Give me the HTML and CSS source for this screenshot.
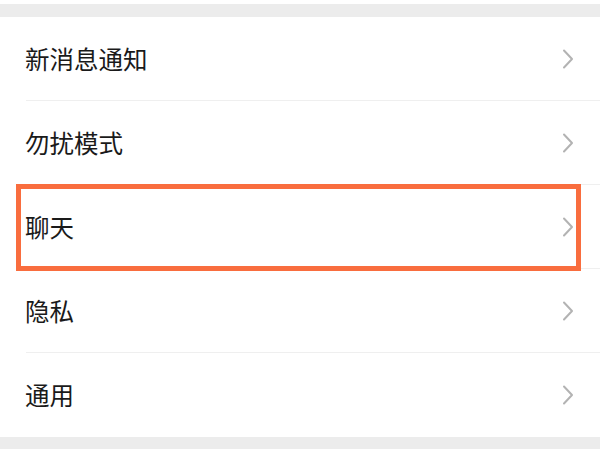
FILE: index.html
```html
<!DOCTYPE html>
<html lang="zh">
<head>
<meta charset="utf-8">
<link rel="stylesheet" href="styles.css">
</head>
<body>
<div class="page">
  <div class="band band-top"></div>
  <ul class="list">
    <li class="row"><span class="label">新消息通知</span><svg class="chev" viewBox="0 0 12 20"><path d="M2 1.5 L10 10 L2 18.5"/></svg></li>
    <li class="row"><span class="label">勿扰模式</span><svg class="chev" viewBox="0 0 12 20"><path d="M2 1.5 L10 10 L2 18.5"/></svg></li>
    <li class="row row-hl"><span class="label">聊天</span><svg class="chev" viewBox="0 0 12 20"><path d="M2 1.5 L10 10 L2 18.5"/></svg><div class="highlight"></div></li>
    <li class="row"><span class="label">隐私</span><svg class="chev" viewBox="0 0 12 20"><path d="M2 1.5 L10 10 L2 18.5"/></svg></li>
    <li class="row last"><span class="label">通用</span><svg class="chev" viewBox="0 0 12 20"><path d="M2 1.5 L10 10 L2 18.5"/></svg></li>
  </ul>
  <div class="band band-bottom"></div>
</div>
</body>
</html>
```
FILE: styles.css
```css
html, body {
  margin: 0;
  padding: 0;
  background: #ffffff;
}
.page {
  width: 600px;
  height: 450px;
  display: flex;
  flex-direction: column;
  padding-top: 4px;
  box-sizing: border-box;
  font-family: "Noto Sans CJK SC", "Noto Sans", sans-serif;
}
.band {
  background: #ececec;
  flex: none;
}
.band-top { height: 13px; }
.band-bottom { height: 12px; }
.list {
  list-style: none;
  margin: 0;
  padding: 0;
  background: #ffffff;
}
.row {
  position: relative;
  height: 84px;
  display: flex;
  align-items: center;
  justify-content: space-between;
  padding: 0 26px 0 25px;
  box-sizing: border-box;
}
.row::after {
  content: "";
  position: absolute;
  left: 26px;
  right: 0;
  bottom: 0;
  height: 1px;
  background: #efefef;
}
.row.last::after { display: none; }
.label {
  font-size: 24.5px;
  color: #1a1a1a;
  line-height: 1;
  margin-top: 1px;
}
.chev {
  width: 12px;
  height: 20px;
  fill: none;
  stroke: #b3b3b3;
  stroke-width: 2;
  stroke-linecap: round;
  stroke-linejoin: round;
}
.highlight {
  position: absolute;
  z-index: 2;
  left: 16px;
  top: -1px;
  width: 565px;
  height: 87px;
  border: 5px solid #f96d3e;
  box-sizing: border-box;
}
```
